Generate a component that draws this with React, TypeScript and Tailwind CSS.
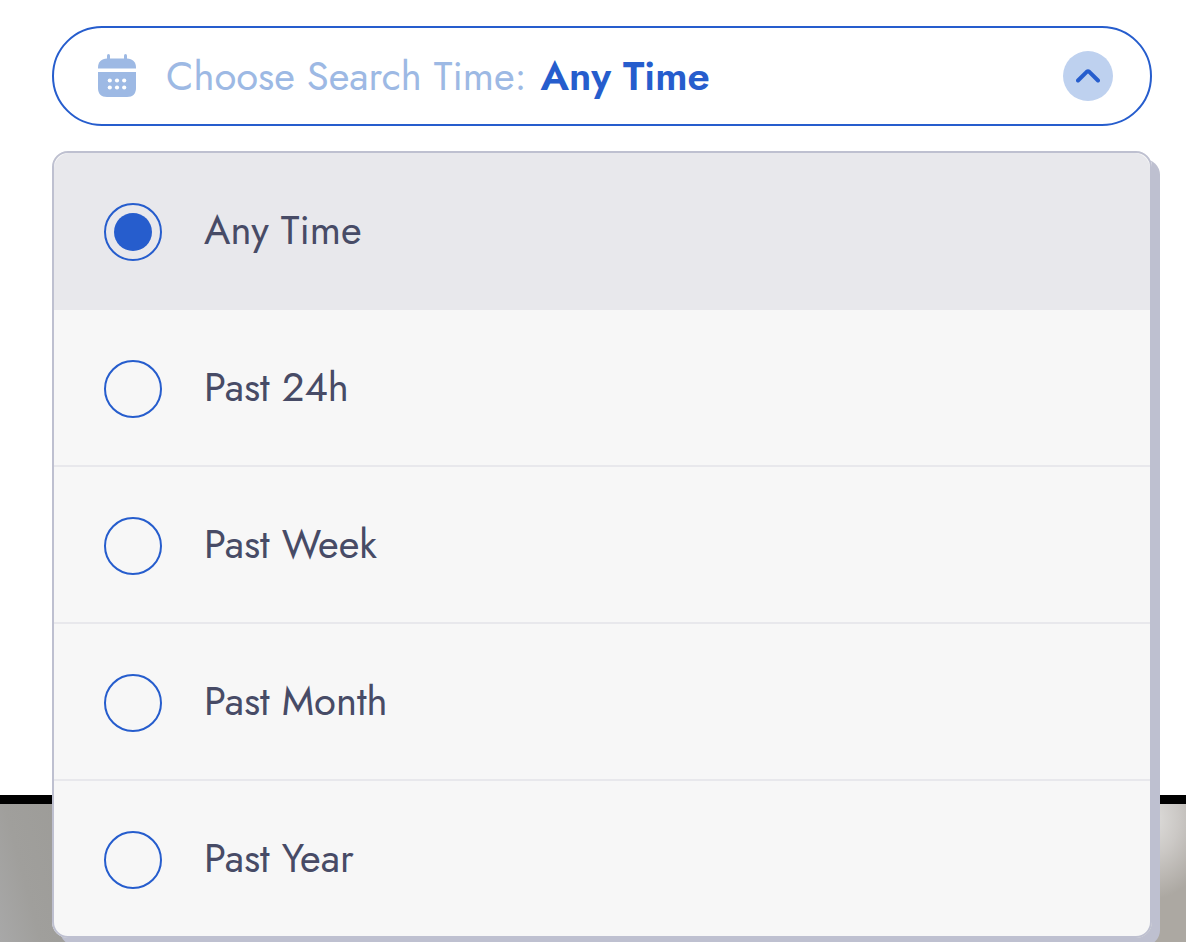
import { useState } from "react";

const options = ["Any Time", "Past 24h", "Past Week", "Past Month", "Past Year"];

function CalendarIcon() {
  return (
    <svg className="h-[44px] w-[38px] shrink-0" viewBox="0 0 38 44" aria-hidden="true">
      <g fill="#9db9e4">
        <rect x="9" y="0" width="3" height="8" rx="1.5" />
        <rect x="26" y="0" width="3" height="8" rx="1.5" />
        <path d="M0 14.5V13.5C0 8 3.5 4.5 9 4.5H29C34.5 4.5 38 8 38 13.5V14.5Z" />
        <path d="M0 18H38V34C38 39.8 34.8 43 29 43H9C3.2 43 0 39.8 0 34Z" />
      </g>
      <g fill="#ffffff">
        <circle cx="11.8" cy="26.5" r="2.1" />
        <circle cx="19" cy="26.5" r="2.1" />
        <circle cx="26.2" cy="26.5" r="2.1" />
        <circle cx="11.8" cy="33.5" r="2.1" />
        <circle cx="19" cy="33.5" r="2.1" />
        <circle cx="26.2" cy="33.5" r="2.1" />
      </g>
    </svg>
  );
}

export default function App() {
  const [open, setOpen] = useState(true);
  const [selected, setSelected] = useState("Any Time");

  return (
    <div className="flex min-h-screen flex-col bg-white font-[Jost,Lato,sans-serif]">
      <main className="min-h-[795px] pt-[26px] pr-[34px] pl-[52px]">
        <div className="relative">
          <button
            type="button"
            aria-expanded={open}
            onClick={() => setOpen(!open)}
            className="flex h-[100px] w-full items-center rounded-full border-2 border-[#265dcd] bg-white pr-[37px] pl-[44px] text-left text-[40px] leading-[48px]"
          >
            <CalendarIcon />
            <span className="ml-[30px] text-[#9db9e4]">
              Choose Search Time: <span className="ml-0.5 font-semibold text-[#265dcd]">{selected}</span>
            </span>
            <span className="ml-auto flex size-[50px] shrink-0 items-center justify-center rounded-full bg-[#bed1ef]">
              <svg className={open ? "h-4 w-6" : "h-4 w-6 rotate-180"} viewBox="0 0 24 16" fill="none" aria-hidden="true">
                <path d="M2 12.5L10.7 3.8Q12 2.7 13.3 3.8L22 12.5" stroke="#265dcd" strokeWidth="4" strokeLinecap="round" strokeLinejoin="round" />
              </svg>
            </span>
          </button>

          {open && (
            <fieldset
              aria-label="Choose Search Time"
              className="absolute top-full right-0 left-0 z-10 mt-[25px] overflow-hidden rounded-2xl border-2 border-[#bec0d0] bg-[#f7f7f7] shadow-[8px_8px_0_0_#bec0d0]"
            >
              {options.map((option) => (
                <label
                  key={option}
                  className="flex h-[157px] cursor-pointer items-center gap-[42px] border-b-2 border-[#e8e8ec] pt-0.5 pl-[50px] text-[40px] leading-[48px] text-[#474b66] last:h-[155px] last:border-b-0 has-checked:bg-[#e8e8ec]"
                >
                  <input
                    type="radio"
                    name="search-time"
                    value={option}
                    checked={selected === option}
                    onChange={() => setSelected(option)}
                    className="size-[58px] shrink-0 cursor-pointer appearance-none rounded-full border-2 border-[#265dcd] bg-clip-content p-2 checked:bg-[#265dcd]"
                  />
                  <span className="pb-1">{option}</span>
                </label>
              ))}
            </fieldset>
          )}
        </div>
      </main>

      <section className="flex grow justify-between border-t-[9px] border-black bg-[#a5a29d]">
        <div className="w-20 bg-[linear-gradient(75deg,#a8a8a8_0%,#a09f9c_35%,#9c9b97_100%)]" />
        <div className="w-[34px] bg-[#aca8a2] bg-[radial-gradient(60px_80px_at_0_15px,#dedddb_0%,#cbc8c5_45%,#aca8a2_100%)]" />
      </section>
    </div>
  );
}
